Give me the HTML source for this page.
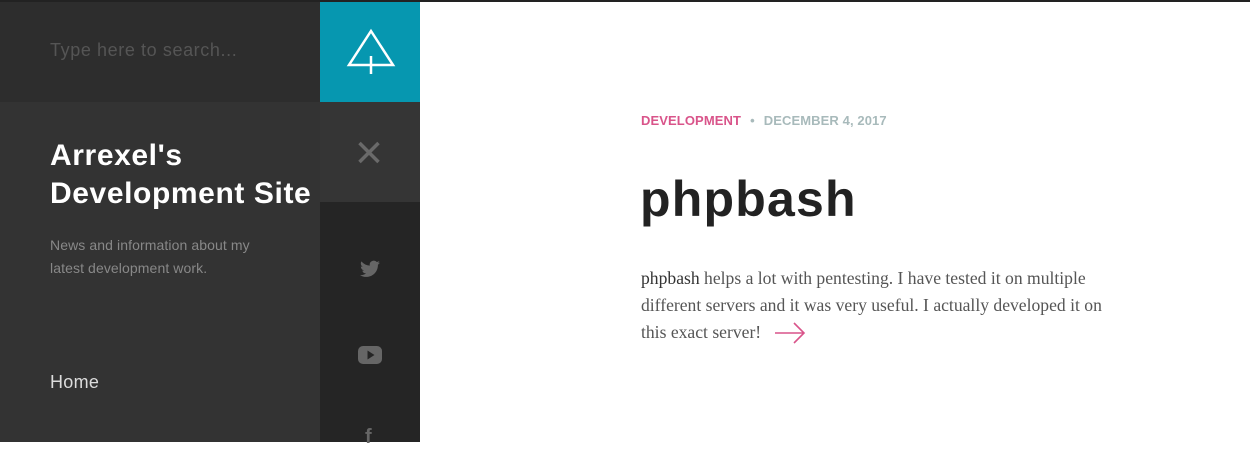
<!DOCTYPE html>
<html><head><style>
*{margin:0;padding:0;box-sizing:border-box}
body{width:1250px;height:442px;overflow:hidden;background:#fff;font-family:"Liberation Sans",sans-serif;position:relative}
.top{position:absolute;left:0;top:0;width:1250px;height:2px;background:#222}
.search{position:absolute;left:0;top:2px;width:320px;height:100px;background:#2d2d2d}
.search span{position:absolute;left:50px;top:38px;font-size:18px;color:#555;letter-spacing:0.6px}
.teal{position:absolute;left:320px;top:2px;width:100px;height:100px;background:#0697b0}
.panel{position:absolute;left:0;top:102px;width:320px;height:340px;background:#333}
.closebox{position:absolute;left:320px;top:102px;width:100px;height:100px;background:#353535}
.social{position:absolute;left:320px;top:202px;width:100px;height:240px;background:#252525}
h1.site{position:absolute;left:50px;top:137px;font-size:30px;line-height:38px;color:#fff;font-weight:bold;letter-spacing:0.6px;white-space:nowrap}
.desc{position:absolute;left:50px;top:234px;font-size:14px;line-height:23px;color:#888;letter-spacing:0.1px}
.home{position:absolute;left:50px;top:372px;font-size:18px;color:#ddd;letter-spacing:0.3px}
.meta{position:absolute;left:641px;top:113px;font-size:13px;font-weight:bold;letter-spacing:0.1px}
.meta .c{color:#d9548a}.meta .d{color:#a8babb}.meta .dot{color:#a8babb;margin:0 9px}
.title{position:absolute;left:640px;top:170px;font-size:50px;font-weight:bold;color:#222;letter-spacing:1.2px}
.body{position:absolute;left:641px;top:265px;width:476px;font-family:"Liberation Serif",serif;font-size:17.6px;line-height:27px;color:#555}
.body b{font-weight:normal;color:#333}
</style></head><body>
<div class="top"></div>
<div class="search"><span>Type here to search...</span></div>
<div class="teal"><svg width="100" height="100" viewBox="0 0 100 100"><path d="M51 29 L73 63 L29 63 Z" fill="none" stroke="#fff" stroke-width="2.5"/><line x1="51" y1="54" x2="51" y2="72" stroke="#fff" stroke-width="2.5"/></svg></div>
<div class="panel"></div>
<div class="closebox"><svg width="100" height="100"><path d="M39.5 41 L58.5 60 M58.5 41 L39.5 60" stroke="#6a6a6a" stroke-width="3.5"/></svg></div>
<div class="social">
<svg style="position:absolute;left:40px;top:58px" width="20" height="18" viewBox="0 0 24 20"><path d="M24 2.4a10 10 0 0 1-2.8.8A5 5 0 0 0 23.3.4a10 10 0 0 1-3.1 1.2A4.9 4.9 0 0 0 11.8 6 14 14 0 0 1 1.7.9a4.9 4.9 0 0 0 1.5 6.6 4.9 4.9 0 0 1-2.2-.6 4.9 4.9 0 0 0 3.9 4.9 5 5 0 0 1-2.2.1 4.9 4.9 0 0 0 4.6 3.4A9.9 9.9 0 0 1 0 17.3 14 14 0 0 0 7.5 19.5c9 0 14-7.5 14-14v-.6A10 10 0 0 0 24 2.4z" fill="#666"/></svg>
<svg style="position:absolute;left:38px;top:144px" width="24" height="18" viewBox="0 0 24 18"><rect x="0" y="0" width="24" height="18" rx="5" fill="#666"/><path d="M9.5 4.5 L16.5 9 L9.5 13.5Z" fill="#252525"/></svg>
<div style="position:absolute;left:45px;top:224px;font-size:20px;font-weight:bold;color:#666">f</div>
</div>
<h1 class="site">Arrexel's<br>Development Site</h1>
<div class="desc">News and information about my<br>latest development work.</div>
<div class="home">Home</div>
<div class="meta"><span class="c">DEVELOPMENT</span><span class="dot">•</span><span class="d">DECEMBER 4, 2017</span></div>
<div class="title">phpbash</div>
<div class="body"><b>phpbash</b> helps a lot with pentesting. I have tested it on multiple different servers and it was very useful. I actually developed it on this exact server! <svg style="vertical-align:-6px;margin-left:8px" width="32" height="22" viewBox="0 0 32 22"><path d="M1 11 H30 M20 1 L30 11 L20 21" fill="none" stroke="#d9548a" stroke-width="1.6"/></svg></div>
</body></html>
